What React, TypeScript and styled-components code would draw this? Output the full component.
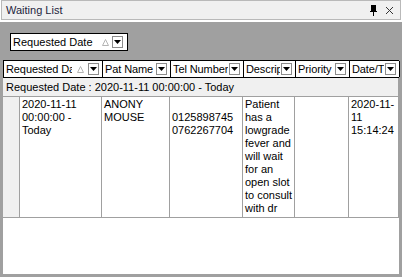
import styled, { createGlobalStyle } from 'styled-components'

const GlobalStyle = createGlobalStyle`
  html, body {
    margin: 0;
    padding: 0;
    background: #ffffff;
  }
  body {
    font-family: 'Liberation Sans', Arial, sans-serif;
    font-size: 11px;
    color: #000000;
  }
`

const COLS = [17, 82, 68, 73, 52, 54, 50]
const GRID = COLS.map((c) => `${c}px`).join(' ')

type Column = { title: string; sort?: boolean; span?: number }

const columns: Column[] = [
  { title: 'Requested Date', sort: true, span: 2 },
  { title: 'Pat Name' },
  { title: 'Tel Number' },
  { title: 'Description' },
  { title: 'Priority' },
  { title: 'Date/Time Added' }
]

const FilterButton = () => (
  <DropButton>
    <svg width="7" height="4" viewBox="0 0 7 4">
      <path d="M0 0h7L3.5 4z" fill="#000" />
    </svg>
  </DropButton>
)

const SortMark = () => (
  <SortIcon>
    <svg width="7" height="7" viewBox="0 0 7 7">
      <path d="M3.5 0.5L6.5 6.5H0.5z" fill="none" stroke="#b4b4b4" />
    </svg>
  </SortIcon>
)

const PinIcon = () => (
  <svg width="9" height="11" viewBox="0 0 9 11">
    <path d="M2 0h5v6H2z M1 6h7v1H1z M4 7h1v4H4z M5 0h1v6H5z" fill="#000" />
  </svg>
)

const CloseIcon = () => (
  <svg width="9" height="9" viewBox="0 0 9 9">
    <path d="M1 1L8 8M8 1L1 8" stroke="#333" strokeWidth="1" />
  </svg>
)

const App = () => {
  return (
    <>
      <GlobalStyle />
      <Window>
        <TitleBar>
          <Title>Waiting List</Title>
          <TitleButtons>
            <PinIcon />
            <CloseIcon />
          </TitleButtons>
        </TitleBar>
        <Body>
          <GroupPanel>
            <GroupChip>
              <ChipLabel>Requested Date</ChipLabel>
              <SortMark />
              <FilterButton />
            </GroupChip>
          </GroupPanel>
          <Grid>
            <HeaderRow>
              {columns.map((col) => (
                <HeaderCell key={col.title} $span={col.span ?? 1}>
                  <HeaderText>{col.title}</HeaderText>
                  {col.sort && <SortMark />}
                  <FilterButton />
                </HeaderCell>
              ))}
            </HeaderRow>
            <GroupRow>Requested Date : 2020-11-11 00:00:00 - Today</GroupRow>
            <DataRow>
              <IndentCell />
              <Cell>2020-11-11 00:00:00 - Today</Cell>
              <Cell>ANONY MOUSE</Cell>
              <Cell>
                <br />
                0125898745
                <br />
                0762267704
              </Cell>
              <Cell>
                Patient has a lowgrade fever and will wait for an open slot to
                consult with dr
              </Cell>
              <Cell />
              <Cell>
                2020-11-<wbr />11 15:14:24
              </Cell>
            </DataRow>
            <Empty />
          </Grid>
        </Body>
      </Window>
    </>
  )
}

const Window = styled.div`
  width: 402px;
  height: 277px;
  display: flex;
  flex-direction: column;
  background: #ffffff;
  overflow: hidden;
`

const TitleBar = styled.div`
  height: 18px;
  margin: 0 1px 0 1px;
  border: 1px solid #b9b9b9;
  background: #f0f0f0;
  display: flex;
  align-items: center;
  justify-content: space-between;
  padding: 0 6px 0 4px;
`

const Title = styled.span`
  color: #1e1e3c;
`

const TitleButtons = styled.div`
  display: flex;
  align-items: center;
  gap: 7px;
`

const Body = styled.div`
  flex: 1;
  display: flex;
  flex-direction: column;
  margin-top: 1px;
  border-top: 1px solid #ffffff;
  background: #a0a0a0;
  padding: 0 3px 3px 3px;
  min-height: 0;
`

const GroupPanel = styled.div`
  height: 38px;
  box-sizing: border-box;
  padding: 11px 0 0 7px;
`

const GroupChip = styled.div`
  display: inline-flex;
  align-items: center;
  box-sizing: border-box;
  width: 118px;
  height: 18px;
  border: 1px solid #000;
  background: #fff;
  padding: 0 4px 0 2px;
`

const ChipLabel = styled.span`
  flex: 1;
  white-space: nowrap;
`

const SortIcon = styled.span`
  display: inline-flex;
  margin: 0 3px 0 4px;
`

const DropButton = styled.span`
  display: inline-flex;
  align-items: center;
  justify-content: center;
  box-sizing: border-box;
  width: 11px;
  height: 12px;
  border: 1px solid #8c8c8c;
  background: #fff;
  flex-shrink: 0;
`

const Grid = styled.div`
  flex: 1;
  display: flex;
  flex-direction: column;
  background: #fff;
`

const HeaderRow = styled.div`
  display: grid;
  grid-template-columns: ${GRID};
  height: 18px;
  box-sizing: border-box;
  border: 1px solid #000;
  border-right: none;
  background: #fff;
`

const HeaderCell = styled.div<{ $span: number }>`
  grid-column: span ${({ $span }) => $span};
  display: flex;
  align-items: center;
  gap: 1px;
  border-right: 1px solid #000;
  padding: 0 3px 0 2px;
  overflow: hidden;
  min-width: 0;
`

const HeaderText = styled.span`
  flex: 1;
  min-width: 0;
  overflow: hidden;
  white-space: nowrap;
  letter-spacing: -0.1px;
`

const GroupRow = styled.div`
  height: 18px;
  box-sizing: border-box;
  display: flex;
  align-items: center;
  padding-left: 3px;
  background: #f0f0f0;
  border-right: 1px solid #a0a0a0;
  white-space: nowrap;
`

const DataRow = styled.div`
  display: grid;
  grid-template-columns: ${GRID};
  height: 122px;
  box-sizing: border-box;
  border-top: 1px solid #a0a0a0;
  border-bottom: 1px solid #a0a0a0;
  line-height: 13px;
`

const IndentCell = styled.div`
  background: #f0f0f0;
  border-right: 1px solid #a0a0a0;
`

const Cell = styled.div`
  border-right: 1px solid #a0a0a0;
  padding: 1px 0 0 2px;
  overflow: hidden;
`

const Empty = styled.div`
  flex: 1;
  background: #fff;
`

export default App
